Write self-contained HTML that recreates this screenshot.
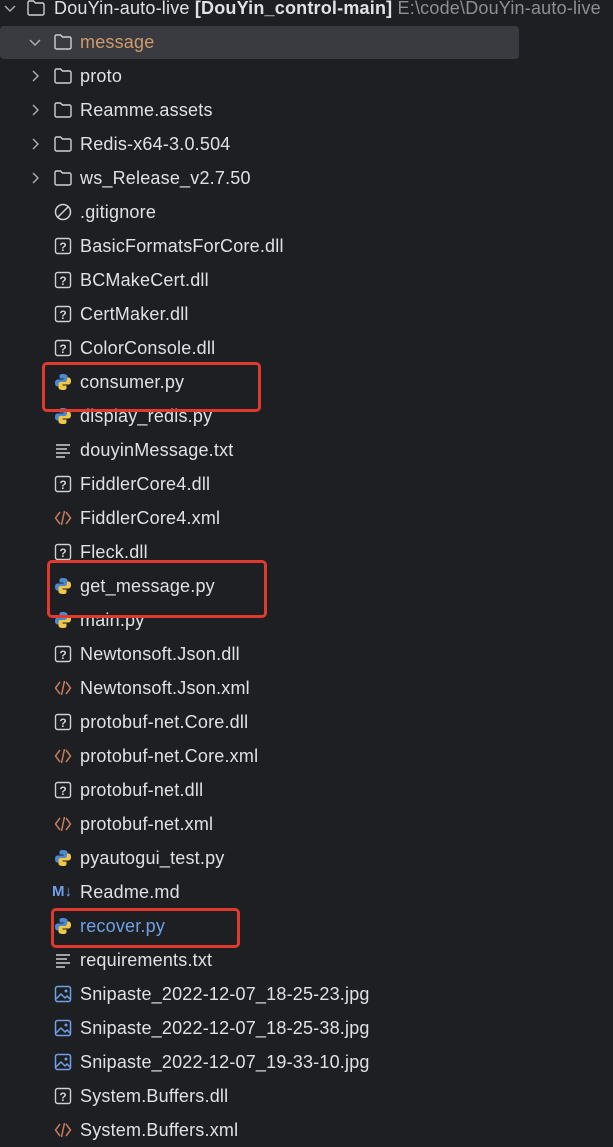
<!DOCTYPE html>
<html><head><meta charset="utf-8"><style>
body{margin:0;width:613px;height:1145px;background:#1e1f22;overflow:hidden;font-family:"Liberation Sans",sans-serif;color:#dfe1e5;font-size:18px;position:relative}
.r{position:absolute;left:0;height:34px;line-height:34px;white-space:nowrap}
.t{position:absolute;left:80px;top:0;letter-spacing:0.2px}
.ic{position:absolute;left:53px;top:7px;width:20px;height:20px}
.ar{position:absolute;left:27px;top:9px;width:16px;height:16px}
.sel{position:absolute;left:0;top:26px;width:519px;height:33px;background:#393b40;border-radius:4px}
.box{position:absolute;border:3px solid #e03a2e;border-radius:5px}
</style></head><body>
<div class="sel"></div>
<svg width="0" height="0" style="position:absolute"><defs>
<g id="fold"><path d="M2 4.5a1.5 1.5 0 0 1 1.5-1.5h4l2 2h7a1.5 1.5 0 0 1 1.5 1.5v9a1.5 1.5 0 0 1-1.5 1.5h-13a1.5 1.5 0 0 1-1.5-1.5z" fill="none" stroke="#ced0d6" stroke-width="1.4"/></g>
<g id="q"><rect x="2.5" y="2.5" width="15" height="15" rx="2" fill="none" stroke="#ced0d6" stroke-width="1.4"/><text x="10" y="15" font-size="12" font-weight="bold" text-anchor="middle" fill="#ced0d6" font-family="Liberation Sans">?</text></g>
<g id="py"><path d="M9.5 2c-3 0-3 1.3-3 2.5V6.5h4v1H4.5C2.8 7.5 2 9 2 11s.8 3.5 2.5 3.5h1.5v-2c0-1.5 1.2-2.5 2.5-2.5h4c1.2 0 2-1 2-2V4.5C14.5 3 13 2 9.5 2z" fill="#4a87d4"/><path d="M10.5 18c3 0 3-1.3 3-2.5V13.5h-4v-1h6c1.7 0 2.5-1.5 2.5-3.5s-.8-3.5-2.5-3.5H14v2c0 1.5-1.2 2.5-2.5 2.5h-4c-1.2 0-2 1-2 2v3.5C5.5 17 7 18 10.5 18z" fill="#f0c746"/></g>
<g id="xml"><path d="M7 4L2.5 10 7 16M13 4l4.5 6L13 16M11.5 3l-3 14" fill="none" stroke="#c57c5c" stroke-width="1.5"/></g>
<g id="txt"><path d="M3 5h14M3 9h11M3 13h14M3 17h9" stroke="#ced0d6" stroke-width="1.5"/></g>
<g id="img"><rect x="2.5" y="2.5" width="15" height="15" rx="2" fill="none" stroke="#6ea1e6" stroke-width="1.5"/><path d="M3 15l5-5 4 4 2-2 3 3" fill="none" stroke="#6ea1e6" stroke-width="1.5"/><circle cx="13" cy="7" r="1.5" fill="#6ea1e6"/></g>
<g id="ign"><circle cx="10" cy="10" r="7.5" fill="none" stroke="#ced0d6" stroke-width="1.5"/><path d="M5 15L15 5" stroke="#ced0d6" stroke-width="1.5"/></g>
<g id="cr"><path d="M6 3l5 5-5 5" fill="none" stroke="#aeb1b6" stroke-width="1.4"/></g>
<g id="cd"><path d="M3 6l5 5 5-5" fill="none" stroke="#aeb1b6" stroke-width="1.4"/></g>
</defs></svg>

<div class="r" style="top:-9px;width:613px"><svg class="ar" style="left:2px" viewBox="0 0 16 16"><use href="#cd"/></svg><svg class="ic" style="left:26px" viewBox="0 0 20 20"><use href="#fold"/></svg><span class="t" style="left:54px">DouYin-auto-live <b>[DouYin_control-main]</b> <span style="color:#8c8f94">E:\code\DouYin-auto-live</span></span></div>
<div class="r" style="top:25px"><svg class="ar" viewBox="0 0 16 16"><use href="#cd"/></svg><svg class="ic" viewBox="0 0 20 20"><use href="#fold"/></svg><span class="t" style="color:#d09a6a">message</span></div>
<div class="r" style="top:59px"><svg class="ar" viewBox="0 0 16 16"><use href="#cr"/></svg><svg class="ic" viewBox="0 0 20 20"><use href="#fold"/></svg><span class="t">proto</span></div>
<div class="r" style="top:93px"><svg class="ar" viewBox="0 0 16 16"><use href="#cr"/></svg><svg class="ic" viewBox="0 0 20 20"><use href="#fold"/></svg><span class="t">Reamme.assets</span></div>
<div class="r" style="top:127px"><svg class="ar" viewBox="0 0 16 16"><use href="#cr"/></svg><svg class="ic" viewBox="0 0 20 20"><use href="#fold"/></svg><span class="t">Redis-x64-3.0.504</span></div>
<div class="r" style="top:161px"><svg class="ar" viewBox="0 0 16 16"><use href="#cr"/></svg><svg class="ic" viewBox="0 0 20 20"><use href="#fold"/></svg><span class="t">ws_Release_v2.7.50</span></div>
<div class="r" style="top:195px"><svg class="ic" viewBox="0 0 20 20"><use href="#ign"/></svg><span class="t">.gitignore</span></div>
<div class="r" style="top:229px"><svg class="ic" viewBox="0 0 20 20"><use href="#q"/></svg><span class="t">BasicFormatsForCore.dll</span></div>
<div class="r" style="top:263px"><svg class="ic" viewBox="0 0 20 20"><use href="#q"/></svg><span class="t">BCMakeCert.dll</span></div>
<div class="r" style="top:297px"><svg class="ic" viewBox="0 0 20 20"><use href="#q"/></svg><span class="t">CertMaker.dll</span></div>
<div class="r" style="top:331px"><svg class="ic" viewBox="0 0 20 20"><use href="#q"/></svg><span class="t">ColorConsole.dll</span></div>
<div class="r" style="top:365px"><svg class="ic" viewBox="0 0 20 20"><use href="#py"/></svg><span class="t">consumer.py</span></div>
<div class="r" style="top:399px"><svg class="ic" viewBox="0 0 20 20"><use href="#py"/></svg><span class="t">display_redis.py</span></div>
<div class="r" style="top:433px"><svg class="ic" viewBox="0 0 20 20"><use href="#txt"/></svg><span class="t">douyinMessage.txt</span></div>
<div class="r" style="top:467px"><svg class="ic" viewBox="0 0 20 20"><use href="#q"/></svg><span class="t">FiddlerCore4.dll</span></div>
<div class="r" style="top:501px"><svg class="ic" viewBox="0 0 20 20"><use href="#xml"/></svg><span class="t">FiddlerCore4.xml</span></div>
<div class="r" style="top:535px"><svg class="ic" viewBox="0 0 20 20"><use href="#q"/></svg><span class="t">Fleck.dll</span></div>
<div class="r" style="top:569px"><svg class="ic" viewBox="0 0 20 20"><use href="#py"/></svg><span class="t">get_message.py</span></div>
<div class="r" style="top:603px"><svg class="ic" viewBox="0 0 20 20"><use href="#py"/></svg><span class="t">main.py</span></div>
<div class="r" style="top:637px"><svg class="ic" viewBox="0 0 20 20"><use href="#q"/></svg><span class="t">Newtonsoft.Json.dll</span></div>
<div class="r" style="top:671px"><svg class="ic" viewBox="0 0 20 20"><use href="#xml"/></svg><span class="t">Newtonsoft.Json.xml</span></div>
<div class="r" style="top:705px"><svg class="ic" viewBox="0 0 20 20"><use href="#q"/></svg><span class="t">protobuf-net.Core.dll</span></div>
<div class="r" style="top:739px"><svg class="ic" viewBox="0 0 20 20"><use href="#xml"/></svg><span class="t">protobuf-net.Core.xml</span></div>
<div class="r" style="top:773px"><svg class="ic" viewBox="0 0 20 20"><use href="#q"/></svg><span class="t">protobuf-net.dll</span></div>
<div class="r" style="top:807px"><svg class="ic" viewBox="0 0 20 20"><use href="#xml"/></svg><span class="t">protobuf-net.xml</span></div>
<div class="r" style="top:841px"><svg class="ic" viewBox="0 0 20 20"><use href="#py"/></svg><span class="t">pyautogui_test.py</span></div>
<div class="r" style="top:875px"><span style="position:absolute;left:52px;color:#6ea1e6;font-weight:bold;font-size:15px">M↓</span><span class="t">Readme.md</span></div>
<div class="r" style="top:909px"><svg class="ic" viewBox="0 0 20 20"><use href="#py"/></svg><span class="t" style="color:#6ea1e6">recover.py</span></div>
<div class="r" style="top:943px"><svg class="ic" viewBox="0 0 20 20"><use href="#txt"/></svg><span class="t">requirements.txt</span></div>
<div class="r" style="top:977px"><svg class="ic" viewBox="0 0 20 20"><use href="#img"/></svg><span class="t">Snipaste_2022-12-07_18-25-23.jpg</span></div>
<div class="r" style="top:1011px"><svg class="ic" viewBox="0 0 20 20"><use href="#img"/></svg><span class="t">Snipaste_2022-12-07_18-25-38.jpg</span></div>
<div class="r" style="top:1045px"><svg class="ic" viewBox="0 0 20 20"><use href="#img"/></svg><span class="t">Snipaste_2022-12-07_19-33-10.jpg</span></div>
<div class="r" style="top:1079px"><svg class="ic" viewBox="0 0 20 20"><use href="#q"/></svg><span class="t">System.Buffers.dll</span></div>
<div class="r" style="top:1113px"><svg class="ic" viewBox="0 0 20 20"><use href="#xml"/></svg><span class="t">System.Buffers.xml</span></div>

<div class="box" style="left:42px;top:362px;width:213px;height:44px"></div>
<div class="box" style="left:47px;top:560px;width:214px;height:52px"></div>
<div class="box" style="left:51px;top:908px;width:183px;height:34px"></div>
</body></html>
